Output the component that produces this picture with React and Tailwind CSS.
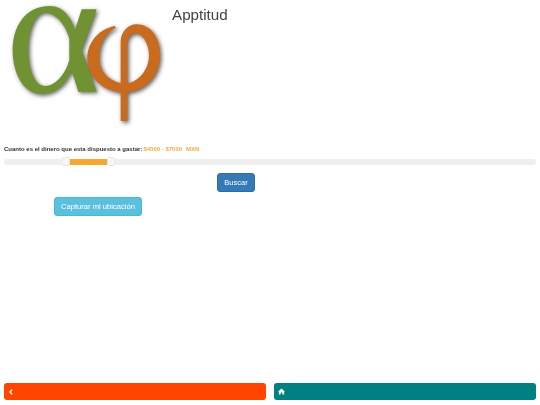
import React from "react";

function Logo() {
  const alpha = "M150 18 C190 18 215 55 225 90 L245 28 L290 28 L245 150 L290 275 L235 275 L215 212 C195 255 165 282 125 282 C70 282 38 220 38 150 C38 80 75 18 150 18 Z M135 38 C105 38 85 90 85 150 C85 210 105 258 135 258 C165 258 195 225 208 180 L208 115 C195 70 165 38 135 38 Z";
  const phi = "M345 78 C300 85 262 125 262 175 C262 230 305 270 362 278 L362 363 L382 363 L382 278 C440 270 480 225 480 165 C480 110 450 73 410 73 C385 73 362 95 362 125 L362 250 C325 240 298 215 298 175 C298 130 315 100 347 84 Z M382 125 C385 110 395 100 405 100 C430 100 447 135 447 165 C447 210 415 245 382 250 Z";
  return (
    <svg width="165" height="136" viewBox="0 0 495 408" className="shrink-0 block">
      <defs>
        <filter id="s" x="-20%" y="-20%" width="140%" height="140%"><feGaussianBlur stdDeviation="7" /></filter>
        <filter id="b" x="-5%" y="-5%" width="110%" height="110%"><feGaussianBlur stdDeviation="1.2" /></filter>
      </defs>
      <g filter="url(#s)" fill="#444" fillOpacity="0.85" fillRule="evenodd" transform="translate(5 5)">
        <path d={alpha} />
        <path d={phi} />
      </g>
      <g filter="url(#b)" fillRule="evenodd">
        <path d={alpha} fill="#6f9232" />
        <path d={phi} fill="#c96a1c" />
      </g>
    </svg>
  );
}

export default function App() {
  return (
    <div className="w-[540px] h-[405px] bg-white flex flex-col font-['Liberation_Sans',Arial,sans-serif] text-[#333] blur-[0.4px]">
      <div className="flex h-[143px] shrink-0">
        <Logo />
        <h1 className="ml-[7px] mt-[5px] text-[15.2px] leading-[20px] font-normal text-[#444]">Apptitud</h1>
      </div>
      <div className="pl-1 flex items-center gap-[1px] h-[12px] text-[6px] font-bold">
        <span>Cuanto es el dinero que esta dispuesto a gastar:</span>
        <span className="text-[#f0ad4e]">$4000 - $7000</span>
        <span className="text-[#f0ad4e] ml-[3px]">MXN</span>
      </div>
      <div className="mx-1 mt-[4px] h-[6px] rounded-[3px] bg-[#efefef] relative">
        <div className="absolute left-[60px] w-[46px] top-0 h-[6px] bg-[#f5a72f]" />
        <div className="absolute left-[58px] top-[-2px] w-[8px] h-[9px] rounded-[2px] bg-[#f7f7f7] border border-[#e8e8e8]" />
        <div className="absolute left-[103px] top-[-2px] w-[8px] h-[9px] rounded-[2px] bg-[#f7f7f7] border border-[#e8e8e8]" />
      </div>
      <div className="pl-[217px] mt-[8px]">
        <button className="block w-[38px] h-[19px] rounded-[3px] bg-[#337ab7] border border-[#2e6da4] text-white text-[7.5px]">Buscar</button>
      </div>
      <div className="mt-[5px] pl-[54px]">
        <button className="block w-[88px] h-[19px] rounded-[3px] bg-[#5bc0de] border border-[#46b8da] text-white text-[7.6px]">Capturar mi ubicación</button>
      </div>
      <div className="flex-1" />
      <div className="flex gap-[8px] px-1 mb-[5px]">
        <div className="w-[262px] h-[17px] rounded-[3px] bg-[#ff4500] flex items-center pl-[5px]">
          <svg width="4" height="6" viewBox="0 0 4 6"><path d="M3.2 0.6 L1 3 L3.2 5.4" fill="none" stroke="#fff" strokeWidth="1.4" /></svg>
        </div>
        <div className="w-[262px] h-[17px] rounded-[3px] bg-[#008080] flex items-center pl-[4px]">
          <svg width="7" height="7" viewBox="0 0 8 8"><path d="M4 0.5 L8 4.2 L7 4.2 L7 7.5 L5 7.5 L5 5 L3 5 L3 7.5 L1 7.5 L1 4.2 L0 4.2 Z" fill="#fff" /></svg>
        </div>
      </div>
    </div>
  );
}
